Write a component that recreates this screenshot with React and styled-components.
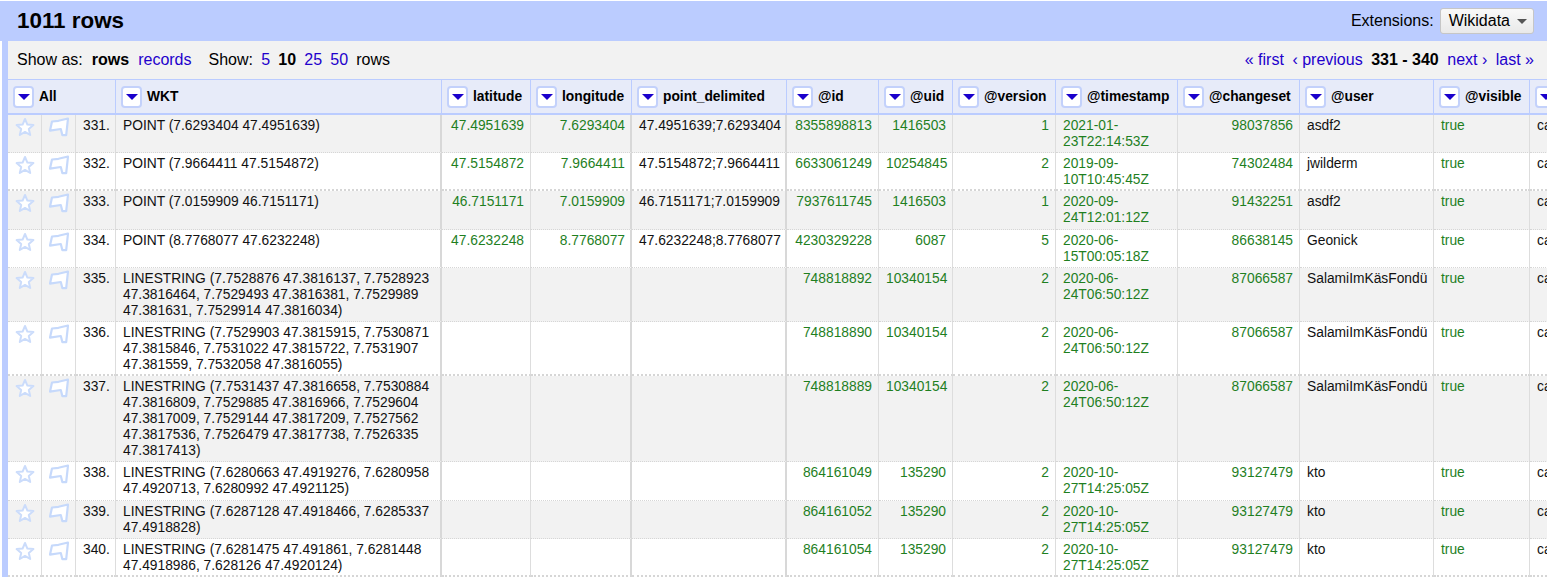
import React from 'react';
import styled, { createGlobalStyle } from 'styled-components';

const GlobalStyle = createGlobalStyle`
  html, body {
    margin: 0;
    padding: 0;
    background: #ffffff;
    overflow: hidden;
  }
  body {
    font-family: "Liberation Sans", Arial, sans-serif;
    font-size: 13.8px;
    color: #000000;
  }
`;

const Page = styled.div`
  width: 1547px;
  height: 578px;
  overflow: hidden;
  padding-top: 1px;
  box-sizing: border-box;
`;

const TitleBar = styled.div`
  display: flex;
  align-items: center;
  justify-content: space-between;
  height: 40px;
  padding: 0 13px 0 17px;
  background: #bbccff;
`;

const RowCount = styled.h1`
  margin: 0;
  font-size: 22.4px;
  font-weight: bold;
`;

const Extensions = styled.div`
  display: flex;
  align-items: center;
  gap: 6px;
  font-size: 16px;
`;

const MenuButton = styled.button`
  display: flex;
  align-items: center;
  gap: 7px;
  height: 26px;
  padding: 0 6px 0 8px;
  border: 1px solid #c6c6c6;
  border-radius: 3px;
  background: linear-gradient(#f9f9f9, #e9e9e9);
  font: inherit;
  color: #000000;

  &::after {
    content: '';
    border-left: 5px solid transparent;
    border-right: 5px solid transparent;
    border-top: 5px solid #555555;
  }
`;

const Main = styled.div`
  margin-left: 2px;
  border-left: 6px solid #bbccff;
`;

const Toolbar = styled.div`
  display: flex;
  align-items: center;
  justify-content: space-between;
  height: 38px;
  padding: 0 13px 0 9px;
  background: #f2f2f2;
  font-size: 16px;
`;

const Group = styled.div`
  display: flex;
  align-items: center;
  gap: ${(p) => p.$gap || 8.5}px;
`;

const Controls = styled.div`
  display: flex;
  gap: 17px;
`;

const PageLink = styled.a`
  color: #2200cc;
`;

const Current = styled.b`
  color: #000000;
`;

const DataTable = styled.table`
  table-layout: fixed;
  border-collapse: separate;
  border-spacing: 0;
  width: 1622px;
`;

const HeaderCell = styled.th`
  height: 36px;
  padding: 0 0 0 5px;
  box-sizing: border-box;
  border-top: 1px solid #bbccff;
  border-bottom: 2px solid #bbccff;
  border-right: 1px solid #bbccff;
  background: #e7ebf9;
  text-align: left;
  font-size: 13.8px;
  white-space: nowrap;
  overflow: hidden;
`;

const HeaderInner = styled.div`
  display: flex;
  align-items: center;
  gap: 5px;
`;

const DropButton = styled.span`
  display: flex;
  align-items: center;
  justify-content: center;
  flex: none;
  width: 21px;
  height: 22px;
  box-sizing: border-box;
  border: 2px solid #c3d1fb;
  border-radius: 4px;
  background: #ffffff;

  &::after {
    content: '';
    border-left: 6px solid transparent;
    border-right: 6px solid transparent;
    border-top: 6px solid #1a00cc;
  }
`;

const Row = styled.tr`
  background: ${(p) => (p.$odd ? '#f2f2f2' : '#ffffff')};
`;

const Cell = styled.td`
  padding: 3px ${(p) => (p.$heavy && p.$numeric ? 5 : 6)}px ${(p) => (p.$group ? 1.2 : 2.2)}px 7px;
  box-sizing: border-box;
  vertical-align: top;
  line-height: 16px;
  border-bottom: ${(p) => (p.$group ? '2px dotted #d6d6d6' : '1px dotted #d6d6d6')};
  border-right: ${(p) => (p.$heavy ? '2px solid #d8d8d8' : '1px solid #dddddd')};
  text-align: ${(p) => (p.$numeric ? 'right' : 'left')};
  color: ${(p) => (p.$green ? '#1f7f1f' : '#111111')};
  overflow: hidden;
`;

const IconCell = styled(Cell)`
  padding: 2px 0 0;
  text-align: center;
`;

const Icon = styled.svg`
  display: block;
  margin: 0 auto;
`;

const StarIcon = () => (
  <Icon width="20" height="20" viewBox="0 0 20 20">
    <path
      d="M10 2 L12.4 7.6 L18.4 8.1 L13.8 12.1 L15.2 18 L10 14.9 L4.8 18 L6.2 12.1 L1.6 8.1 L7.6 7.6 Z"
      fill="#ffffff"
      stroke="#cbdcfb"
      strokeWidth="2"
      strokeLinejoin="round"
    />
  </Icon>
);

const FlagIcon = () => (
  <Icon width="20" height="20" viewBox="0 0 20 20">
    <path
      d="M3 4.5 L9.5 3.8 L19 1.5 L17.2 18.2 L13.4 18.2 L11.8 12 L1 13.6 Z"
      fill="#ffffff"
      stroke="#c6d9fb"
      strokeWidth="2.2"
      strokeLinejoin="round"
    />
  </Icon>
);

const columnWidths = [34, 34, 40, 326, 89, 101, 155, 92, 74, 103, 122, 122, 134, 96, 100];

const columns = ['WKT', 'latitude', 'longitude', 'point_delimited', '@id', '@uid', '@version', '@timestamp', '@changeset', '@user', '@visible', ''];

const rows = [
  ['331.', 'POINT (7.6293404 47.4951639)', '47.4951639', '7.6293404', '47.4951639;7.6293404', '8355898813', '1416503', '1', '2021-01-23T22:14:53Z', '98037856', 'asdf2'],
  ['332.', 'POINT (7.9664411 47.5154872)', '47.5154872', '7.9664411', '47.5154872;7.9664411', '6633061249', '10254845', '2', '2019-09-10T10:45:45Z', '74302484', 'jwilderm'],
  ['333.', 'POINT (7.0159909 46.7151171)', '46.7151171', '7.0159909', '46.7151171;7.0159909', '7937611745', '1416503', '1', '2020-09-24T12:01:12Z', '91432251', 'asdf2'],
  ['334.', 'POINT (8.7768077 47.6232248)', '47.6232248', '8.7768077', '47.6232248;8.7768077', '4230329228', '6087', '5', '2020-06-15T00:05:18Z', '86638145', 'Geonick'],
  ['335.', 'LINESTRING (7.7528876 47.3816137, 7.7528923 47.3816464, 7.7529493 47.3816381, 7.7529989 47.381631, 7.7529914 47.3816034)', '', '', '', '748818892', '10340154', '2', '2020-06-24T06:50:12Z', '87066587', 'SalamiImKäsFondü'],
  ['336.', 'LINESTRING (7.7529903 47.3815915, 7.7530871 47.3815846, 7.7531022 47.3815722, 7.7531907 47.381559, 7.7532058 47.3816055)', '', '', '', '748818890', '10340154', '2', '2020-06-24T06:50:12Z', '87066587', 'SalamiImKäsFondü'],
  ['337.', 'LINESTRING (7.7531437 47.3816658, 7.7530884 47.3816809, 7.7529885 47.3816966, 7.7529604 47.3817009, 7.7529144 47.3817209, 7.7527562 47.3817536, 7.7526479 47.3817738, 7.7526335 47.3817413)', '', '', '', '748818889', '10340154', '2', '2020-06-24T06:50:12Z', '87066587', 'SalamiImKäsFondü'],
  ['338.', 'LINESTRING (7.6280663 47.4919276, 7.6280958 47.4920713, 7.6280992 47.4921125)', '', '', '', '864161049', '135290', '2', '2020-10-27T14:25:05Z', '93127479', 'kto'],
  ['339.', 'LINESTRING (7.6287128 47.4918466, 7.6285337 47.4918828)', '', '', '', '864161052', '135290', '2', '2020-10-27T14:25:05Z', '93127479', 'kto'],
  ['340.', 'LINESTRING (7.6281475 47.491861, 7.6281448 47.4918986, 7.628126 47.4920124)', '', '', '', '864161054', '135290', '2', '2020-10-27T14:25:05Z', '93127479', 'kto'],
];

const groupEnds = ['332.', '336.', '340.'];

// breaks the timestamp after the date's second dash, as the table wraps it
const Timestamp = ({ value }) => {
  const cut = value.indexOf('-', 5) + 1;
  return (
    <>
      {value.slice(0, cut)}
      <br />
      {value.slice(cut)}
    </>
  );
};

const App = () => (
  <Page>
    <GlobalStyle />
    <TitleBar>
      <RowCount>1011 rows</RowCount>
      <Extensions>
        Extensions:
        <MenuButton>Wikidata</MenuButton>
      </Extensions>
    </TitleBar>
    <Main>
      <Toolbar>
        <Controls>
          <Group $gap={9}>
            <span>Show as:</span>
            <Current>rows</Current>
            <PageLink>records</PageLink>
          </Group>
          <Group $gap={8.2}>
            <span>Show:</span>
            <PageLink>5</PageLink>
            <Current>10</Current>
            <PageLink>25</PageLink>
            <PageLink>50</PageLink>
            <span>rows</span>
          </Group>
        </Controls>
        <Group>
          <PageLink>« first</PageLink>
          <PageLink>‹ previous</PageLink>
          <Current>331 - 340</Current>
          <PageLink>next ›</PageLink>
          <PageLink>last »</PageLink>
        </Group>
      </Toolbar>
      <DataTable>
        <colgroup>
          {columnWidths.map((w, i) => (
            <col key={i} style={{ width: w }} />
          ))}
        </colgroup>
        <thead>
          <tr>
            <HeaderCell colSpan={3}>
              <HeaderInner>
                <DropButton />
                All
              </HeaderInner>
            </HeaderCell>
            {columns.map((name) => (
              <HeaderCell key={name}>
                <HeaderInner>
                  <DropButton />
                  {name}
                </HeaderInner>
              </HeaderCell>
            ))}
          </tr>
        </thead>
        <tbody>
          {rows.map((r, i) => {
            const group = groupEnds.includes(r[0]);
            return (
              <Row key={r[0]} $odd={i % 2 === 0}>
                <IconCell $group={group}><StarIcon /></IconCell>
                <IconCell $group={group}><FlagIcon /></IconCell>
                <Cell $group={group}>{r[0]}</Cell>
                <Cell $group={group} $heavy>{r[1]}</Cell>
                <Cell $group={group} $numeric $green>{r[2]}</Cell>
                <Cell $group={group} $numeric $green $heavy>{r[3]}</Cell>
                <Cell $group={group} $heavy>{r[4]}</Cell>
                <Cell $group={group} $numeric $green>{r[5]}</Cell>
                <Cell $group={group} $numeric $green>{r[6]}</Cell>
                <Cell $group={group} $numeric $green>{r[7]}</Cell>
                <Cell $group={group} $green><Timestamp value={r[8]} /></Cell>
                <Cell $group={group} $numeric $green>{r[9]}</Cell>
                <Cell $group={group}>{r[10]}</Cell>
                <Cell $group={group} $green>true</Cell>
                <Cell $group={group}>ca</Cell>
              </Row>
            );
          })}
        </tbody>
      </DataTable>
    </Main>
  </Page>
);

export default App;
